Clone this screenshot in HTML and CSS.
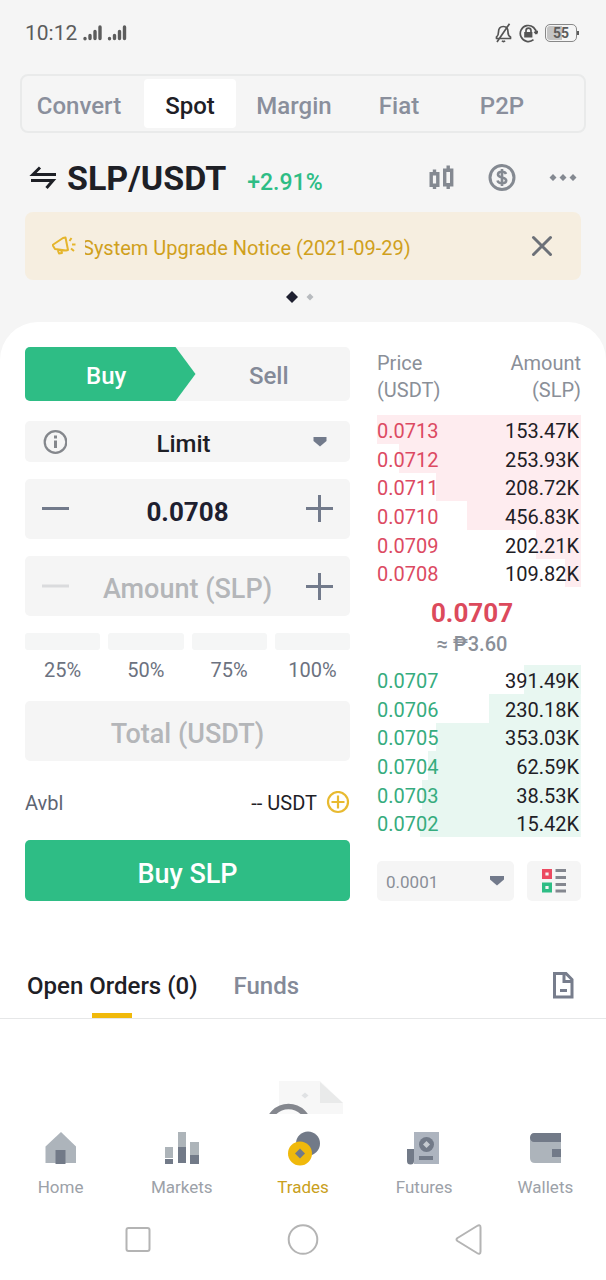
FILE: index.html
```html
<!DOCTYPE html>
<html lang="en">
<head>
<meta charset="utf-8">
<meta name="viewport" content="width=device-width, initial-scale=1">
<title>SLP/USDT Spot</title>
<link rel="stylesheet" href="styles.css">
</head>
<body>
<div class="status">
  <span class="status-time">10:12</span>
  <svg class="signals" width="44" height="16" viewBox="0 0 44 16" fill="none" stroke="#5c5c5c" stroke-width="3.400" stroke-linecap="round"><path d="M2 13.500v.2M7 10.500v3M12 6.500v7M17 2v11.500M26.500 13.500v.2M31.500 10.500v3M36.500 6.500v7M41.500 2v11.500"/></svg>
  <div class="status-icons">
    <svg width="17" height="20" viewBox="0 0 17 20" fill="none" stroke="#555" stroke-width="1.700" stroke-linejoin="round"><path d="M1.500 15.500V14c1.500-1 2-2.500 2-5 0-3.500 1.500-5.500 4.800-5.500S13 5.500 13 9c0 2.500.5 4 2.500 5v1.500zM7 17.800c.8 1 2.200 1 3 0M14.500 .8 2 19"/></svg>
    <svg width="19" height="20" viewBox="0 0 19 20" fill="none" stroke="#555" stroke-width="1.700"><path d="M14.500 16.600A8 8 0 1 1 17.300 11M17.300 11l-2-2.200M17.300 11l1.500-3"/><rect x="5.200" y="9" width="8.200" height="5.500" fill="#555" stroke="none"/><path d="M7 9.500V7.600a2.500 2.500 0 0 1 5 0v1.900"/></svg>
    <span class="battery">55</span>
  </div>
</div>

<nav class="modes" aria-label="Trade modes">
  <button class="mode">Convert</button>
  <button class="mode mode-active">Spot</button>
  <button class="mode">Margin</button>
  <button class="mode">Fiat</button>
  <button class="mode">P2P</button>
</nav>

<header class="pair">
  <button class="icon-btn" aria-label="Switch pair"><svg width="28" height="28" viewBox="0 0 28 28" fill="none" stroke="#1e2026" stroke-width="3"><path d="M27 10.500H4L11 3.500M2 16.500h22L17.500 24"/></svg></button>
  <h1 class="pair-name">SLP/USDT</h1>
  <span class="pair-change">+2.91%</span>
  <div class="pair-tools">
    <button class="icon-btn" aria-label="Chart"><svg width="26" height="26" viewBox="0 0 26 26" fill="none" stroke="#848991" stroke-width="3.400"><path d="M2.200 8.700h6.600v11.600H2.200zM15.700 5.200h7v14.600h-7zM5.500 4.500v4M5.500 20V24M19.200 .5v5M19.200 19.500V24"/></svg></button>
    <button class="icon-btn" aria-label="Buy with cash"><svg width="28" height="28" viewBox="0 0 28 28" fill="none" stroke="#848991"><circle cx="14" cy="13.500" r="12" stroke-width="3"/><path d="M18 10c-.5-1.500-2-2.200-4-2.200-2.300 0-4 1-4 2.700 0 4 8.200 1.800 8.200 6 0 1.700-1.700 2.800-4.200 2.800s-4-1-4.500-2.800M14 5v17" stroke-width="2.600"/></svg></button>
    <button class="icon-btn" aria-label="More"><svg width="28" height="8" viewBox="0 0 28 8" fill="#848991"><path d="M4 0 7.500 3.500 4 7 .5 3.500zM14 0 17.500 3.500 14 7 10.500 3.500zM24 0 27.500 3.500 24 7 20.500 3.500z"/></svg></button>
  </div>
</header>

<section class="notice">
  <svg width="24" height="20" viewBox="0 0 24 20" fill="none" stroke="#e5b52c" stroke-width="2" stroke-linejoin="round"><path d="M.5 9 11 2l2.500-.5L16 14l-2 .5-11-1.500zM5.500 13.500l1.500 4 3-.5-1-3M17.500 5l2-3M20 8.500h3.500M19 12.500l3 2.500"/></svg>
  <a class="notice-text" href="#">System Upgrade Notice (2021-09-29)</a>
  <button class="icon-btn" aria-label="Dismiss"><svg width="22" height="22" viewBox="0 0 22 22" stroke="#6c7078" stroke-width="3" stroke-linecap="round"><path d="M2.500 2.500l17 17M19.500 2.500l-17 17"/></svg></button>
</section>
<div class="pager">
  <svg width="12" height="12" viewBox="0 0 12 12" fill="#1e2030"><path d="M6 0l6 6-6 6-6-6z"/></svg>
  <svg width="8" height="8" viewBox="0 0 8 8" fill="#b8bbbf"><path d="M4 .5 7.500 4 4 7.500.5 4z"/></svg>
</div>

<main class="sheet">
  <div class="trade">
    <form class="order">
      <div class="sides">
        <button type="button" class="side side-buy">Buy</button>
        <button type="button" class="side side-sell">Sell</button>
      </div>
      <div class="type">
        <svg width="24" height="24" viewBox="0 0 24 24" fill="none" stroke="#84878c" stroke-width="2.200"><circle cx="12.500" cy="12" r="10.800"/><path d="M12.500 10.500V18M12.500 5.500v3" stroke-width="3"/></svg>
        <select class="type-select" aria-label="Order type"><option>Limit</option><option>Market</option></select>
        <svg class="caret" width="14" height="10" viewBox="0 0 14 10" fill="#727a8b"><path d="M.5 0h13v4L7 9.500.5 4z"/></svg>
      </div>
      <div class="stepper">
        <button type="button" class="icon-btn" aria-label="Decrease price"><svg width="28" height="28" viewBox="0 0 28 28" stroke="#727a8b" stroke-width="3"><path d="M0 13.500h27"/></svg></button>
        <input class="field field-price" value="0.0708" aria-label="Price">
        <button type="button" class="icon-btn" aria-label="Increase price"><svg width="28" height="28" viewBox="0 0 28 28" stroke="#727a8b" stroke-width="3"><path d="M1 13.500h27M14.500 0v27"/></svg></button>
      </div>
      <div class="stepper">
        <button type="button" class="icon-btn" aria-label="Decrease amount"><svg width="28" height="28" viewBox="0 0 28 28" stroke="#dadbdd" stroke-width="3"><path d="M0 14h27"/></svg></button>
        <input class="field" placeholder="Amount (SLP)" aria-label="Amount (SLP)">
        <button type="button" class="icon-btn" aria-label="Increase amount"><svg width="28" height="28" viewBox="0 0 28 28" stroke="#727a8b" stroke-width="3"><path d="M1 14.500h27M14.500 1v27"/></svg></button>
      </div>
      <div class="shares">
        <button type="button" class="share">25%</button>
        <button type="button" class="share">50%</button>
        <button type="button" class="share">75%</button>
        <button type="button" class="share">100%</button>
      </div>
      <div class="stepper"><input class="field" placeholder="Total (USDT)" aria-label="Total (USDT)"></div>
      <div class="available">
        <span>Avbl</span>
        <span class="available-value">-- USDT</span>
        <button type="button" class="icon-btn" aria-label="Deposit"><svg width="24" height="24" viewBox="0 0 24 24" fill="none" stroke="#e8ba30" stroke-width="2.200"><circle cx="12" cy="11" r="10"/><path d="M5.500 11h13M12 4.500v13"/></svg></button>
      </div>
      <button type="button" class="submit">Buy SLP</button>
    </form>

    <section class="book">
      <table class="levels">
        <thead><tr><th>Price<br>(USDT)</th><th>Amount<br>(SLP)</th></tr></thead>
        <tbody class="asks">
          <tr><td>0.0713</td><td>153.47K</td></tr>
          <tr style="--depth:89%"><td>0.0712</td><td>253.93K</td></tr>
          <tr style="--depth:71%"><td>0.0711</td><td>208.72K</td></tr>
          <tr style="--depth:56%"><td>0.0710</td><td>456.83K</td></tr>
          <tr style="--depth:22%"><td>0.0709</td><td>202.21K</td></tr>
          <tr style="--depth:8%"><td>0.0708</td><td>109.82K</td></tr>
        </tbody>
      </table>
      <div class="last">
        <strong class="last-price">0.0707</strong>
        <span class="last-fiat">≈ ₱3.60</span>
      </div>
      <table class="levels">
        <tbody class="bids">
          <tr style="--depth:28%"><td>0.0707</td><td>391.49K</td></tr>
          <tr style="--depth:45%"><td>0.0706</td><td>230.18K</td></tr>
          <tr style="--depth:71%"><td>0.0705</td><td>353.03K</td></tr>
          <tr style="--depth:75%"><td>0.0704</td><td>62.59K</td></tr>
          <tr style="--depth:78%"><td>0.0703</td><td>38.53K</td></tr>
          <tr style="--depth:79%"><td>0.0702</td><td>15.42K</td></tr>
        </tbody>
      </table>
      <div class="book-tools">
        <div class="precision">
          <select class="precision-select" aria-label="Price precision"><option>0.0001</option><option>0.001</option></select>
          <svg class="caret" width="14" height="10" viewBox="0 0 14 10" fill="#727a8b"><path d="M0 0h14v3.500L7 9.500 0 3.500z"/></svg>
        </div>
        <button class="view" aria-label="Book layout"><svg width="24" height="24" viewBox="0 0 24 24" fill="none"><path d="M1.700 1.700h6.600v6.600H1.700z" stroke="#ec4a61" stroke-width="3.400"/><path d="M1.700 15.200h6.600v6.600H1.700z" stroke="#2ebd85" stroke-width="3.400"/><path d="M13.500 1.500H24M13.500 8.500H24M13.500 15.500H24M13.500 22H24" stroke="#84878f" stroke-width="3.200"/></svg></button>
      </div>
    </section>
  </div>

  <nav class="orders" aria-label="Orders">
    <button class="orders-tab orders-active">Open Orders (0)</button>
    <button class="orders-tab">Funds</button>
    <button class="icon-btn orders-history" aria-label="Order history"><svg width="22" height="28" viewBox="0 0 22 28" fill="none" stroke="#777d8c" stroke-width="3"><path d="M1.500 1.500H13l6 6v17.500H1.500zM11 1.500v8h8M7 18.500h7"/></svg></button>
  </nav>

  <div class="empty">
    <svg width="80" height="33" viewBox="0 0 80 33"><path d="M16 0h41l23 22v11H16z" fill="#f7f7f7"/><path d="M57 1v21h23z" fill="#e9eaea"/><path d="M42 11.500l3.500 3-3.500 3-3.500-3z" fill="#e0e2e4"/><circle cx="25.500" cy="46" r="20.500" fill="#fafafa" stroke="#84878e" stroke-width="5.500"/></svg>
  </div>
</main>

<footer class="bottom">
  <nav class="tabs" aria-label="Main">
    <a class="tab" href="#"><svg width="36" height="36" viewBox="0 0 36 36"><path d="M2.500 33V16.500L18 2l15 14.500V33z" fill="#adb4bb"/><path d="M12.500 20h10v14h-10z" fill="#727a88"/></svg>Home</a>
    <a class="tab" href="#"><svg width="36" height="36" viewBox="0 0 36 36"><path d="M1 17h8v11H1zM14 2h8v15h-8zM26 12h9v13h-9z" fill="#adb4b9"/><path d="M1 29h8v5H1zM14 17h8v16h-8zM26 25h9v9h-9z" fill="#727a88"/></svg>Markets</a>
    <a class="tab tab-active" href="#"><svg width="36" height="36" viewBox="0 0 36 36"><circle cx="23" cy="13.500" r="12" fill="#727a88"/><circle cx="15" cy="23.500" r="12" fill="#f0b90b"/><path d="M15 18.500l5 5-5 5-5-5z" fill="#727a88"/></svg>Trades</a>
    <a class="tab" href="#"><svg width="36" height="36" viewBox="0 0 36 36"><path d="M8 2h25v32H8z" fill="#adb4bf"/><path d="M1 19h7v12a3.500 3.500 0 0 1-7 0zM13 26h14v4H13z" fill="#727a88"/><circle cx="20.500" cy="14.500" r="7.500" fill="#727a88"/><path d="M20.500 11l3.500 3.500-3.500 3.500-3.500-3.500z" fill="#c5cad0"/></svg>Futures</a>
    <a class="tab" href="#"><svg width="36" height="36" viewBox="0 0 36 36"><path d="M3 7h31v26H8q-5 0-5-5z" fill="#adb4bb"/><path d="M34 3v9H7a4 4.500 0 0 1 0-9zM25 19h9v8h-9z" fill="#727a88"/></svg>Wallets</a>
  </nav>
  <div class="system">
    <svg width="32" height="32" viewBox="0 0 32 32"><rect x="4.500" y="5" width="23" height="23" rx="2"/></svg>
    <svg width="32" height="32" viewBox="0 0 32 32"><circle cx="16" cy="16.500" r="14.300"/></svg>
    <svg width="32" height="32" viewBox="0 0 32 32"><path d="M5.500 15 25 3q3.500-2 3.500 1.500v24q0 3.500-3.500 1.500L5.500 18q-2-1.500 0-3z"/></svg>
  </div>
</footer>
</body>
</html>
```

FILE: styles.css
```css
* { box-sizing: border-box; }

body {
  margin: 0;
  min-height: 100vh;
  display: flex;
  flex-direction: column;
  background: #f5f5f5;
  color: #1e2026;
  font: 400 20px/24px Roboto, "Liberation Sans", sans-serif;
}

button, input, select {
  margin: 0;
  padding: 0;
  border: 0;
  border-radius: 0;
  background: none;
  color: inherit;
  font: inherit;
  appearance: none;
}

svg { display: block; flex: none; }
a { color: inherit; text-decoration: none; }
.icon-btn { display: flex; flex: none; }

.status {
  display: flex;
  align-items: center;
  gap: 6px;
  height: 66px;
  padding: 0 29px 0 25px;
  color: #5c5c5c;
}
.status-time { font-size: 21px; }
.status-icons { display: flex; align-items: center; gap: 7px; margin-left: auto; }
.battery {
  width: 32px;
  height: 18px;
  border: 1px solid #888;
  border-radius: 5px;
  background: linear-gradient(to right, #c4c4c4 55%, #f5f5f5 55%);
  box-shadow: inset 0 0 0 1px #f5f5f5;
  font-size: 14px;
  font-weight: 700;
  line-height: 16px;
  text-align: center;
}
.battery { position: relative; }
.battery::after {
  content: "";
  position: absolute;
  top: 6px;
  right: -3px;
  width: 2px;
  height: 4px;
  background: #5c5c5c;
}

.modes {
  display: grid;
  grid-template-columns: 114fr 108fr 100fr 110fr 96fr 34fr;
  margin: 8px 20px 0;
  padding: 3px 0;
  border: 2px solid #e9eaea;
  border-radius: 8px;
}
.mode {
  height: 49px;
  padding-top: 5px;
  border-radius: 4px;
  color: #8a8f9c;
  font-size: 24px;
  font-weight: 500;
}
.mode-active { margin: 0 8px; background: #fff; color: #1e2026; }

.pair {
  display: flex;
  align-items: center;
  height: 79px;
  padding: 10px 29px 0;
}
.pair-name { margin: 0 21px 0 10px; font-size: 34px; line-height: 40px; }
.pair-change { padding-top: 10px; color: #2ebd85; font-size: 23px; font-weight: 500; }
.pair-tools { display: flex; align-items: center; gap: 33px; margin-left: auto; }

.notice {
  display: flex;
  align-items: center;
  gap: 9px;
  height: 68px;
  margin: 0 25px;
  padding: 0 28px 0 27px;
  border-radius: 8px;
  background: #f6eee0;
}
.notice-text {
  flex: 1;
  overflow: hidden;
  padding-top: 4px;
  color: #d0a01c;
  text-indent: -3px;
  white-space: nowrap;
}
.pager { display: flex; align-items: center; justify-content: center; gap: 8px; height: 34px; margin-bottom: 8px; padding-right: 6px; }

.sheet { flex: 1; border-radius: 38px 38px 0 0; background: #fff; }
.trade {
  display: grid;
  grid-template-columns: 325fr 204fr;
  gap: 27px;
  padding: 25px 25px 0;
}

.order { display: flex; flex-direction: column; min-width: 0; }
.sides {
  display: grid;
  grid-template-columns: 1fr 1fr;
  height: 54px;
  margin-bottom: 20px;
  overflow: hidden;
  border-radius: 5px;
  background: #f5f5f5;
}
.side { padding-top: 3px; font-size: 24px; font-weight: 500; }
.side-buy {
  margin-right: -8px;
  padding-right: 8px;
  background: #2ebd85;
  color: #fff;
  clip-path: polygon(0 0, calc(100% - 20px) 0, 100% 50%, calc(100% - 20px) 100%, 0 100%);
}
.side-sell { color: #848a98; }

.type { display: grid; grid-template-columns: 18px 24px 1fr 14px 23px; align-items: center; margin-bottom: 17px; border-radius: 5px; background: #f5f5f5; }
.type > * { grid-row: 1; }
.type > svg { grid-column: 2; pointer-events: none; }
.type > .caret { grid-column: 4; }
.type-select {
  grid-column: 1 / -1;
  height: 41px;
  padding: 4px 8px 0 0;
  font-size: 24px;
  font-weight: 500;
  text-align-last: center;
}

.stepper {
  display: flex;
  align-items: center;
  height: 60px;
  margin-bottom: 17px;
  padding: 0 17px;
  border-radius: 5px;
  background: #f5f5f5;
}
.field {
  flex: 1;
  width: 0;
  min-width: 0;
  height: 60px;
  padding-top: 5px;
  color: #1e2030;
  font-size: 27px;
  font-weight: 500;
  text-align: center;
}
.field-price { font-size: 26px; font-weight: 700; }
.field::placeholder { color: #b4b6b9; opacity: 1; }

.shares { display: grid; grid-template-columns: repeat(4, 1fr); gap: 8px; margin-bottom: 19px; color: #6c7280; }
.share { display: block; }
.share::before {
  content: "";
  display: block;
  height: 17px;
  margin-bottom: 8px;
  border-radius: 3px;
  background: #f5f6f6;
}
.available { display: flex; align-items: center; gap: 9px; height: 45px; margin-bottom: 17px; padding-top: 4px; color: #5e6573; }
.available-value { margin-left: auto; color: #1e2026; }
.submit {
  height: 61px;
  padding-top: 6px;
  border-radius: 5px;
  background: #2ebd85;
  color: #fff;
  font-size: 27px;
  font-weight: 500;
}

.book { min-width: 0; padding-top: 3px; }
.levels { width: 100%; border-collapse: collapse; }
.levels th {
  padding: 0 0 11px;
  color: #8a8f98;
  font-weight: 400;
  line-height: 27px;
  text-align: left;
}
.levels td { height: 29px; padding: 2px 0 0; line-height: 26px; }
.levels tr:nth-child(3n) td { height: 28px; }
.levels th:last-child, .levels td:last-child { text-align: right; }
.levels td:last-child { padding-right: 2px; }
.levels tbody tr {
  background: linear-gradient(var(--tint), var(--tint)) right / var(--depth, 100%) 100% no-repeat;
}
.asks { --tint: #feecef; }
.bids { --tint: #e8f7f1; }
.asks td:first-child { color: #dc4a62; }
.bids td:first-child { color: #36ac7e; }
.last { display: flex; flex-direction: column; align-items: center; padding: 9px 14px 7px 0; }
.last-price { color: #dc4a5c; font-size: 26px; line-height: 34px; }
.last-fiat { color: #8a8f98; font-weight: 500; line-height: 28px; }
.book-tools { display: grid; grid-template-columns: 137fr 54fr; gap: 13px; margin-top: 24px; }
.precision { display: grid; grid-template-columns: 1fr 14px 10px; align-items: center; border-radius: 5px; background: #f5f5f5; }
.precision > * { grid-row: 1; }
.precision > .caret { grid-column: 2; pointer-events: none; }
.precision-select { grid-column: 1 / -1; height: 40px; padding: 2px 0 0 9px; color: #8a8f98; font-size: 17px; }
.view { display: grid; place-items: center; height: 40px; border-radius: 5px; background: #f5f5f5; }

.orders {
  display: flex;
  gap: 36px;
  height: 66px;
  margin-top: 52px;
  padding: 0 31px 0 27px;
  border-bottom: 1px solid #e6e7e8;
}
.orders-tab { position: relative; color: #848a98; font-size: 24px; font-weight: 500; }
.orders-active { color: #1e2026; }
.orders-active::after {
  content: "";
  position: absolute;
  bottom: 0;
  left: 50%;
  width: 40px;
  height: 5px;
  margin-left: -20px;
  background: #f0b90b;
}
.orders-history { align-items: center; margin-left: auto; }

.empty { display: flex; justify-content: center; padding-top: 62px; }

.bottom { background: #fff; }
.tabs { display: grid; grid-template-columns: repeat(5, 1fr); padding-top: 15px; }
.tab {
  display: flex;
  flex-direction: column;
  align-items: center;
  gap: 9px;
  color: #9ca1a8;
  font-size: 17px;
}
.tab-active { color: #c9a020; }
.system {
  display: flex;
  justify-content: center;
  gap: 133px;
  padding: 24px 0 25px;
  fill: none;
  stroke: #b4b4b4;
  stroke-width: 2;
}
```
